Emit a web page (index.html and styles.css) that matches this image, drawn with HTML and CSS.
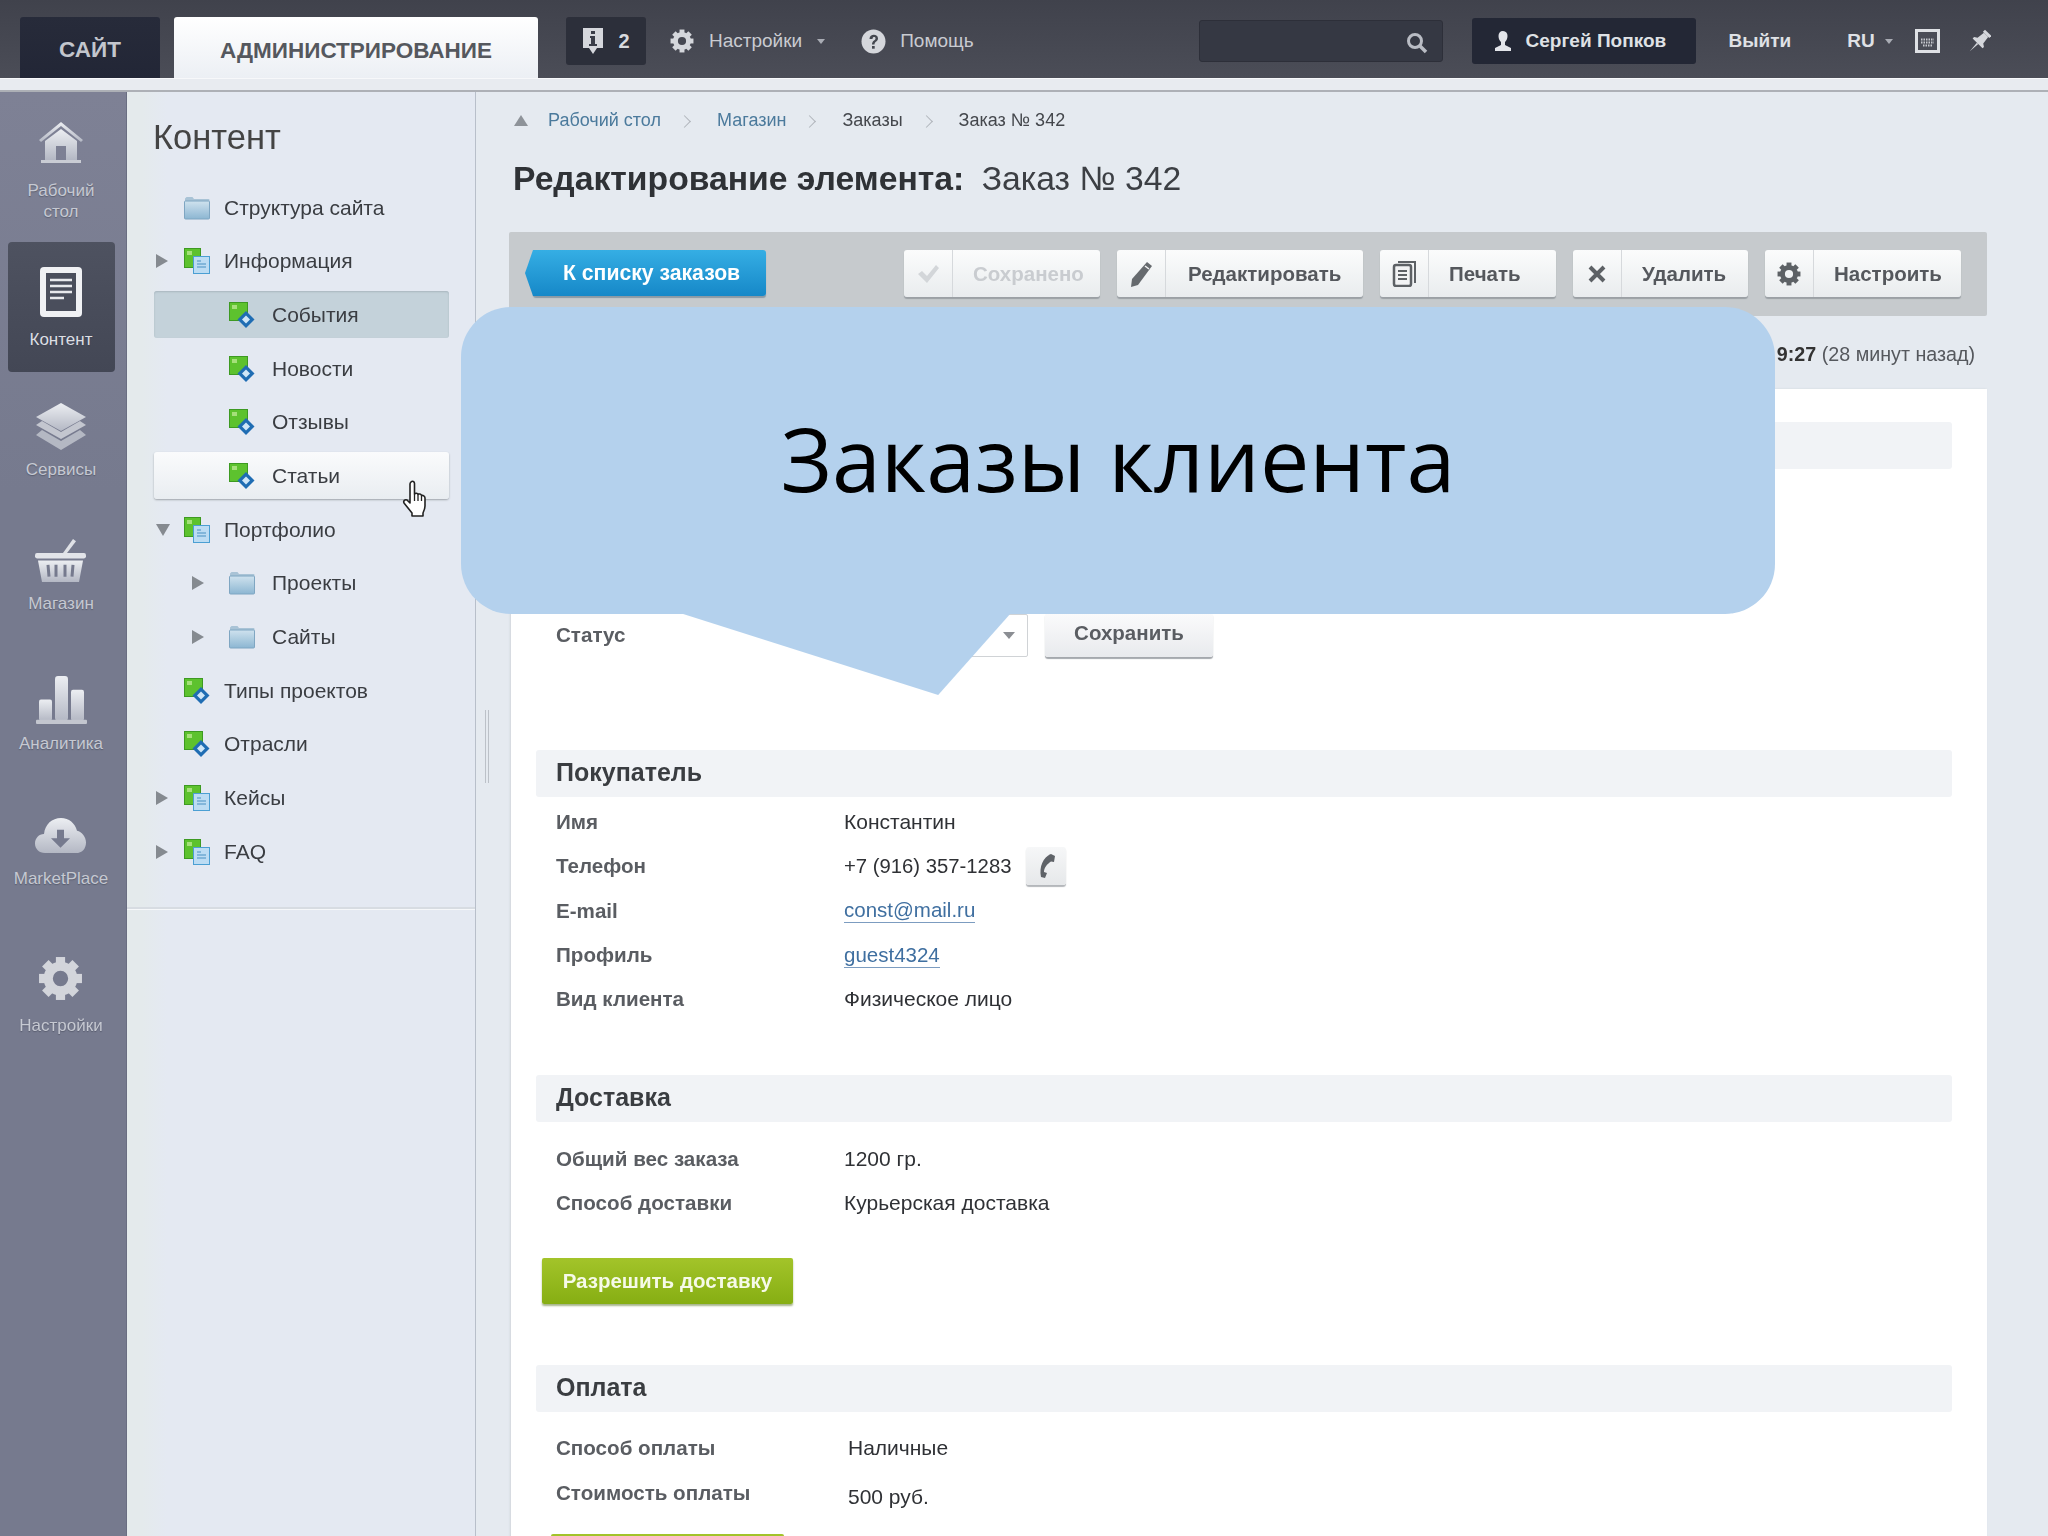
FILE: index.html
```html
<!DOCTYPE html>
<html lang="ru">
<head>
    <meta charset="UTF-8">
    <title>Заказ № 342</title>
    <link rel="stylesheet" href="styles.css">
</head>
<body>

<svg class="defs" aria-hidden="true">
    <defs>
        <linearGradient id="silver" x1="0" y1="0" x2="0" y2="1">
            <stop offset="0" stop-color="#eceef2"/>
            <stop offset="1" stop-color="#b4b8c4"/>
        </linearGradient>
        <linearGradient id="folderfill" x1="0" y1="0" x2="0" y2="1">
            <stop offset="0" stop-color="#cfe2ee"/>
            <stop offset="1" stop-color="#8cb6d2"/>
        </linearGradient>
        <symbol id="i-folder" viewBox="0 0 26 24">
            <path d="M1 4V2.500L2.500 1h6L10 3h14.500q1 0 1 1v2H1z" fill="#a9c3d6"/>
            <rect x="0.500" y="5" width="25" height="18" rx="1" fill="url(#folderfill)" stroke="#7fa6c2"/>
        </symbol>
        <symbol id="i-multi" viewBox="0 0 26 26">
            <rect x="0.500" y="0.500" width="16" height="19" fill="#5dc22e" stroke="#3d9a22"/>
            <rect x="3" y="3" width="5" height="4" fill="#a5e07a"/>
            <rect x="9.500" y="8.500" width="16" height="17" fill="#bcdcf3" stroke="#4b9fd3"/>
            <path d="M13 13h4M13 16h9M13 19h9" stroke="#6fa9d2" stroke-width="1.500"/>
        </symbol>
        <symbol id="i-single" viewBox="0 0 26 26">
            <rect x="0.500" y="0.500" width="18" height="18" fill="#5dc22e" stroke="#3d9a22"/>
            <rect x="3" y="3" width="5" height="4" fill="#a5e07a"/>
            <path d="M17 9l8.500 8.500-8.500 8.500-8.500-8.500z" fill="#1f6db3"/>
            <path d="M17 13.500l4 4-4 4-4-4z" fill="#cfe6f7"/>
        </symbol>
        <symbol id="i-gear" viewBox="0 0 44 44">
            <circle cx="22" cy="22" r="12" fill="none" stroke="currentColor" stroke-width="9"/>
            <g fill="currentColor">
                <rect x="17.500" y="1" width="9" height="10"/>
                <rect x="17.500" y="1" width="9" height="10" transform="rotate(45 22 22)"/>
                <rect x="17.500" y="1" width="9" height="10" transform="rotate(90 22 22)"/>
                <rect x="17.500" y="1" width="9" height="10" transform="rotate(135 22 22)"/>
                <rect x="17.500" y="1" width="9" height="10" transform="rotate(180 22 22)"/>
                <rect x="17.500" y="1" width="9" height="10" transform="rotate(225 22 22)"/>
                <rect x="17.500" y="1" width="9" height="10" transform="rotate(270 22 22)"/>
                <rect x="17.500" y="1" width="9" height="10" transform="rotate(315 22 22)"/>
            </g>
        </symbol>
    </defs>
</svg>

<div class="app">

    <header class="topbar">
        <a class="tab tab-site">САЙТ</a>
        <a class="tab tab-admin">АДМИНИСТРИРОВАНИЕ</a>
        <div class="notify">
            <svg width="22" height="28" viewBox="0 0 22 28"><path d="M1 1h20v20h-6l-4 6-4-6H1z" fill="#d5d7dc"/><rect x="9" y="4" width="4" height="3" fill="#3a3d48"/><path d="M8 9h5v8h2v2H7v-2h2v-6H8z" fill="#3a3d48"/></svg>
            <span>2</span>
        </div>
        <a class="top-link top-settings">
            <svg class="gear-top" width="24" height="24"><use href="#i-gear"/></svg>
            Настройки<i class="caret"></i>
        </a>
        <a class="top-link top-help">
            <svg width="25" height="25" viewBox="0 0 25 25"><circle cx="12.500" cy="12.500" r="12" fill="#d5d7dc"/><path d="M8.500 10c0-5.500 8.500-5.500 8.500-.5 0 3-3.500 3-3.500 6h-2.500c0-4 3.500-4 3.500-6 0-2-3-2-3 .5z" fill="#44474f"/><rect x="11" y="17" width="2.700" height="2.700" fill="#44474f"/></svg>
            Помощь
        </a>
        <div class="search">
            <svg width="22" height="22" viewBox="0 0 22 22"><circle cx="9" cy="9" r="6.500" fill="none" stroke="#b9bcc4" stroke-width="3"/><path d="M14 14l6 6" stroke="#b9bcc4" stroke-width="3.500"/></svg>
        </div>
        <div class="user">
            <svg width="20" height="22" viewBox="0 0 20 22"><path d="M10 1c3 0 4.500 2.200 4.500 5s-1.300 5-2.500 6v3l6 3v3H2v-3l6-3v-3C6.800 11 5.500 9 5.500 6S7 1 10 1z" fill="#e3e5ea"/></svg>
            Сергей Попков
        </div>
        <a class="logout">Выйти</a>
        <a class="lang">RU<i class="caret"></i></a>
        <svg class="kbd" width="25" height="24" viewBox="0 0 25 24"><rect x="1.500" y="1.500" width="22" height="21" fill="#4b4d57" stroke="#dfe1e5" stroke-width="3"/><path d="M6 10.500h13M6 13.500h13M8 16.500h9" stroke="#c8cad0" stroke-width="2" stroke-dasharray="1.500 1"/></svg>
        <svg class="pin" width="24" height="26" viewBox="0 0 24 26"><g transform="rotate(45 12 13)" fill="#d5d7dc"><rect x="7.500" y="0" width="9" height="3"/><path d="M9 3h6l1 8 3 2v2H5v-2l3-2z"/><path d="M11 15h2l-1 11z"/></g></svg>
    </header>
    <div class="strip"></div>

    <div class="layout">

        <nav class="nav">
            <a class="nav-item nav-home">
                <svg width="44" height="41" viewBox="0 0 44 41"><path d="M22 0L44 18l-2 2L22 4 2 20l-2-2z" fill="url(#silver)"/><path d="M6 19L22 7l16 12v19H27V24h-10v14H6z" fill="url(#silver)"/><rect x="2" y="38" width="40" height="3" fill="#c9ccd4"/></svg>
                <span>Рабочий<br>стол</span>
            </a>
            <a class="nav-item nav-active">
                <svg width="42" height="50" viewBox="0 0 42 50"><rect width="42" height="50" rx="4" fill="#f0f1f4"/><rect x="6" y="6" width="30" height="38" fill="#4a4e5c"/><path d="M10 13h22M10 19h22M10 25h22M10 31h14" stroke="#e8e9ed" stroke-width="2.500"/></svg>
                <span>Контент</span>
            </a>
            <a class="nav-item nav-services">
                <svg width="50" height="47" viewBox="0 0 50 47"><path d="M25 0l25 14-25 14L0 14z" fill="url(#silver)"/><path d="M6 18l19 11 19-11 6 4-25 14L0 22z" fill="#c3c6cf"/><path d="M6 27l19 11 19-11 6 5-25 15L0 32z" fill="#b4b8c3"/></svg>
                <span>Сервисы</span>
            </a>
            <a class="nav-item nav-shop">
                <svg width="51" height="44" viewBox="0 0 51 41" preserveAspectRatio="none"><path d="M28 14L38 1l3 2-9 11z" fill="#dfe1e6"/><rect y="14" width="51" height="5" rx="2" fill="#e2e4e9"/><path d="M3 21h45l-4 20H7z" fill="url(#silver)"/><path d="M13 25l1 11M21 25v11M30 25v11M38 25l-1 11" stroke="#767a8e" stroke-width="3"/></svg>
                <span>Магазин</span>
            </a>
            <a class="nav-item nav-stats">
                <svg width="51" height="48" viewBox="0 0 51 45" preserveAspectRatio="none"><rect x="3" y="22" width="13" height="20" rx="2" fill="url(#silver)"/><rect x="19" y="0" width="13" height="42" rx="3" fill="url(#silver)"/><rect x="35" y="13" width="13" height="29" rx="2" fill="url(#silver)"/><rect y="41" width="51" height="4" rx="1" fill="#c3c6cf"/></svg>
                <span>Аналитика</span>
            </a>
            <a class="nav-item nav-market">
                <svg width="51" height="35" viewBox="0 0 51 33" preserveAspectRatio="none"><path d="M10 33C4 33 0 29 0 24c0-5 4-9 9-9C10 6 17 0 26 0c8 0 14 5 16 12 5 1 9 6 9 11 0 6-4 10-10 10z" fill="url(#silver)"/><path d="M22 11h7v8h6L25.500 28 16 19h6z" fill="#767a8e"/></svg>
                <span>MarketPlace</span>
            </a>
            <a class="nav-item nav-config">
                <svg class="gear-nav" width="45" height="45"><use href="#i-gear"/></svg>
                <span>Настройки</span>
            </a>
        </nav>

        <aside class="panel">
            <div class="panel-top">
                <h2 class="panel-title">Контент</h2>
                <ul class="tree">
                    <li class="tree-row"><i class="arrow"></i><svg class="tree-icon"><use href="#i-folder"/></svg>Структура сайта</li>
                    <li class="tree-row"><i class="arrow arrow-right"></i><svg class="tree-icon"><use href="#i-multi"/></svg>Информация</li>
                    <li class="tree-row sub selected"><i class="arrow"></i><svg class="tree-icon"><use href="#i-single"/></svg>События</li>
                    <li class="tree-row sub"><i class="arrow"></i><svg class="tree-icon"><use href="#i-single"/></svg>Новости</li>
                    <li class="tree-row sub"><i class="arrow"></i><svg class="tree-icon"><use href="#i-single"/></svg>Отзывы</li>
                    <li class="tree-row sub hovered"><i class="arrow"></i><svg class="tree-icon"><use href="#i-single"/></svg>Статьи
                        <svg class="hand" width="28" height="38" viewBox="0 0 28 38"><path d="M9 2c1.500-1.500 3.500-.5 3.500 1.500V14c1-1 3-1 3.500.5 1-1 3-.5 3.500 1 1.500-.5 3.500.5 3.500 2.500v8c0 3-1 5-2 7v3H10v-3L2 23c-1-2 1-4 3-3l3 3V4c0-1 .5-1.500 1-2z" fill="#fff" stroke="#222" stroke-width="1.600" stroke-linejoin="round"/><path d="M12.500 14v7M16 15v6M19.500 16v5" stroke="#222" stroke-width="1.300"/></svg>
                    </li>
                    <li class="tree-row"><i class="arrow arrow-down"></i><svg class="tree-icon"><use href="#i-multi"/></svg>Портфолио</li>
                    <li class="tree-row sub"><i class="arrow arrow-right"></i><svg class="tree-icon"><use href="#i-folder"/></svg>Проекты</li>
                    <li class="tree-row sub"><i class="arrow arrow-right"></i><svg class="tree-icon"><use href="#i-folder"/></svg>Сайты</li>
                    <li class="tree-row"><i class="arrow"></i><svg class="tree-icon"><use href="#i-single"/></svg>Типы проектов</li>
                    <li class="tree-row"><i class="arrow"></i><svg class="tree-icon"><use href="#i-single"/></svg>Отрасли</li>
                    <li class="tree-row"><i class="arrow arrow-right"></i><svg class="tree-icon"><use href="#i-multi"/></svg>Кейсы</li>
                    <li class="tree-row"><i class="arrow arrow-right"></i><svg class="tree-icon"><use href="#i-multi"/></svg>FAQ</li>
                </ul>
            </div>
        </aside>

        <div class="grip"></div>

        <main class="main">
            <div class="crumbs">
                <i class="crumb-up"></i>
                <a>Рабочий стол</a><i class="crumb-sep"></i>
                <a>Магазин</a><i class="crumb-sep"></i>
                <span>Заказы</span><i class="crumb-sep"></i>
                <span>Заказ № 342</span>
            </div>

            <h1 class="title"><b>Редактирование элемента:</b> Заказ № 342</h1>

            <div class="toolbar">
                <a class="back">К списку заказов</a>
                <a class="tool tool-saved">
                    <span class="tool-icon"><svg width="24" height="20" viewBox="0 0 24 20"><path d="M2 10l4-3 5 5L20 1l3 3-12 15z" fill="#d3d6d9"/></svg></span>
                    <span class="tool-text">Сохранено</span>
                </a>
                <a class="tool tool-edit">
                    <span class="tool-icon"><svg width="24" height="26" viewBox="0 0 24 26"><path d="M18 1l5 4L9 24l-7 2 1-8z" fill="#666a6e"/><path d="M16 5l4 3" stroke="#f4f5f6" stroke-width="1.500"/></svg></span>
                    <span class="tool-text">Редактировать</span>
                </a>
                <a class="tool tool-print">
                    <span class="tool-icon"><svg width="24" height="26" viewBox="0 0 24 26"><path d="M6 1h17v21" fill="none" stroke="#5d6165" stroke-width="2"/><rect x="2" y="4" width="17" height="21" rx="2" fill="#f2f3f4" stroke="#5d6165" stroke-width="2.500"/><path d="M6 10h9M6 14h9M6 18h9" stroke="#5d6165" stroke-width="2"/></svg></span>
                    <span class="tool-text">Печать</span>
                </a>
                <a class="tool tool-delete">
                    <span class="tool-icon"><svg width="18" height="18" viewBox="0 0 18 18"><path d="M2 2l14 14M16 2L2 16" stroke="#5d6165" stroke-width="4"/></svg></span>
                    <span class="tool-text">Удалить</span>
                </a>
                <a class="tool tool-setup">
                    <span class="tool-icon"><svg class="gear-tool" width="24" height="24"><use href="#i-gear"/></svg></span>
                    <span class="tool-text">Настроить</span>
                </a>
            </div>

            <p class="stamp"><b>9:27</b> (28 минут назад)</p>

            <section class="card">
                <div class="sect-head"></div>

                <div class="status-row">
                    <span class="label">Статус</span>
                    <div class="select"><i class="caret caret-select"></i></div>
                    <a class="save">Сохранить</a>
                </div>

                <h3 class="sect-head buyer-head">Покупатель</h3>
                <dl class="rows buyer-rows">
                    <div class="row"><dt class="label">Имя</dt><dd>Константин</dd></div>
                    <div class="row"><dt class="label">Телефон</dt><dd><span class="phone">+7 (916) 357-1283</span>
                        <a class="call"><svg width="20" height="26" viewBox="0 0 20 26"><path d="M15 1l4 2-1 6-3-.5C11 11 8 15 8 19l3 1-2 5-4-1C3 14 7 4 15 1z" fill="#5f6368"/></svg></a></dd></div>
                    <div class="row"><dt class="label">E-mail</dt><dd><a class="link">const@mail.ru</a></dd></div>
                    <div class="row"><dt class="label">Профиль</dt><dd><a class="link">guest4324</a></dd></div>
                    <div class="row"><dt class="label">Вид клиента</dt><dd>Физическое лицо</dd></div>
                </dl>

                <h3 class="sect-head delivery-head">Доставка</h3>
                <dl class="rows delivery-rows">
                    <div class="row"><dt class="label">Общий вес заказа</dt><dd>1200 гр.</dd></div>
                    <div class="row"><dt class="label">Способ доставки</dt><dd>Курьерская доставка</dd></div>
                </dl>
                <a class="green">Разрешить доставку</a>

                <h3 class="sect-head pay-head">Оплата</h3>
                <dl class="rows pay-rows">
                    <div class="row"><dt class="label">Способ оплаты</dt><dd>Наличные</dd></div>
                    <div class="row"><dt class="label">Стоимость оплаты</dt><dd class="low">500 руб.</dd></div>
                </dl>
                <a class="green green-pay"></a>
            </section>
        </main>
    </div>
</div>

<div class="callout">Заказы клиента</div>
<div class="callout-tail"></div>

</body>
</html>
```

FILE: styles.css
```css
* {
    box-sizing: border-box;
}
html, body {
    margin: 0;
    height: 1536px;
    overflow: hidden;
}
body {
    position: relative;
    font-family: "Liberation Sans", Arial, sans-serif;
    color: #333;
    background-color: #e5eaf0;
}
.defs {
    position: absolute;
    width: 0;
    height: 0;
}
.app {
    height: 1536px;
    display: flex;
    flex-direction: column;
    filter: blur(0.7px);
}

/* top bar */
.topbar {
    height: 78px;
    flex: none;
    display: flex;
    align-items: flex-start;
    padding-left: 20px;
    background: linear-gradient(#40424c, #4b4d57);
    color: #c9cbd1;
    font-size: 19px;
}
.tab {
    height: 61px;
    margin-top: 17px;
    text-align: center;
    font-weight: bold;
    font-size: 22.500px;
    line-height: 66px;
}
.tab-site {
    width: 140px;
    background: linear-gradient(#272b3a, #222636);
    color: #c3c6cd;
    border-radius: 3px 3px 0 0;
}
.tab-admin {
    width: 364px;
    height: 73px;
    margin-left: 14px;
    background: linear-gradient(#fff, #e8ecf2);
    color: #55585e;
    border-radius: 3px 3px 0 0;
    line-height: 68px;
}
.notify {
    width: 80px;
    height: 48px;
    margin: 17px 0 0 28px;
    display: flex;
    align-items: center;
    justify-content: center;
    gap: 14px;
    background-color: #2c2f3a;
    border-radius: 3px;
    font-weight: bold;
    font-size: 20px;
    color: #d8dade;
}
.top-link {
    height: 48px;
    margin-top: 17px;
    display: flex;
    align-items: center;
}
.top-settings {
    margin-left: 24px;
    gap: 15px;
}
.top-help {
    margin-left: 36px;
    gap: 14px;
}
.gear-top {
    color: #d5d7dc;
}
.caret {
    display: inline-block;
    width: 0;
    height: 0;
    margin-left: 0;
    border: 4px solid transparent;
    border-top: 5px solid #a9acb4;
    border-bottom: 0;
}
.search {
    width: 244px;
    height: 42px;
    margin: 20px 0 0 225px;
    padding: 11px 14px 0 0;
    display: flex;
    justify-content: flex-end;
    background-color: #353843;
    border: 1px solid #2d2f39;
    border-radius: 3px;
}
.user {
    width: 224px;
    height: 46px;
    margin: 18px 0 0 29px;
    padding-left: 21px;
    display: flex;
    align-items: center;
    gap: 13px;
    background-color: #232735;
    border-radius: 3px;
    color: #dfe1e5;
    font-weight: bold;
    font-size: 19px;
}
.logout {
    margin: 30px 0 0 33px;
    font-weight: bold;
    color: #dfe1e5;
}
.lang {
    margin: 30px 0 0 56px;
    font-weight: bold;
    color: #dfe1e5;
}
.lang .caret {
    margin: 0 0 3px 10px;
}
.kbd {
    margin: 29px 0 0 22px;
}
.pin {
    margin: 29px 0 0 27px;
}
.strip {
    height: 14px;
    flex: none;
    background-color: #e8ebf0;
    border-bottom: 2px solid #adb0b6;
    border-top: 1px solid #f7f8fa;
}

.layout {
    flex: 1;
    display: flex;
    min-height: 0;
    position: relative;
}

/* left icons */
.nav {
    width: 127px;
    flex: none;
    padding-right: 4px;
    display: flex;
    flex-direction: column;
    align-items: center;
    background-color: #767a8e;
    background-image: linear-gradient(#7e8195, #767a8e 400px);
    border-right: 1px solid #6a6e82;
}
.nav-item {
    display: flex;
    flex-direction: column;
    align-items: center;
    color: #c6c9d2;
    font-size: 17px;
    line-height: 21px;
    text-align: center;
    text-shadow: 0 1px 1px rgba(60, 63, 80, 0.5);
}
.nav-item svg {
    display: block;
    margin-bottom: 9px;
}
.nav-home {
    margin-top: 30px;
}
.nav-home svg {
    margin-bottom: 17px;
}
.nav-active {
    width: 107px;
    height: 130px;
    margin-top: 20px;
    padding-top: 25px;
    background: linear-gradient(#4e5260, #434755);
    border-radius: 4px;
    color: #dcdee3;
}
.nav-active svg {
    margin-bottom: 12px;
}
.nav-services {
    margin-top: 31px;
}
.nav-shop {
    margin-top: 57.500px;
}
.nav-shop svg {
    margin-bottom: 11.500px;
}
.nav-stats {
    margin-top: 61.500px;
}
.nav-market {
    margin-top: 64.500px;
}
.nav-market svg {
    margin-bottom: 14.500px;
}
.nav-config {
    margin-top: 67.500px;
}
.nav-config svg {
    margin-bottom: 13.500px;
}
.gear-nav {
    color: #d3d5db;
}

/* tree panel */
.panel {
    width: 349px;
    flex: none;
    background: linear-gradient(90deg, #e4eaec 15px, #e4e9f2 40px);
    border-right: 1px solid #b8bfca;
}
.panel-top {
    height: 817px;
    padding: 25px 26px 0 27px;
    border-bottom: 2px solid #d7dce2;
    box-shadow: 0 1px 0 #f6f8fa;
}
.panel-title {
    margin: 0 0 0 -1px;
    height: 40px;
    font-size: 34.500px;
    line-height: 40px;
    font-weight: normal;
    color: #444;
}
.tree {
    list-style: none;
    margin: 27px 0 0;
    padding: 0;
}
.tree-row {
    position: relative;
    height: 47px;
    margin-bottom: 6.700px;
    padding-left: 2px;
    display: flex;
    align-items: center;
    font-size: 21px;
    color: #3a3d42;
}
.tree-row.sub {
    padding-left: 38px;
}
.arrow {
    width: 12px;
    height: 14px;
    flex: none;
    margin-right: 16px;
}
.sub .arrow {
    margin-right: 25px;
}
.arrow-right {
    border-left: 12px solid #858a90;
    border-top: 7px solid transparent;
    border-bottom: 7px solid transparent;
}
.arrow-down {
    width: 14px;
    height: 12px;
    margin-right: 14px;
    border-top: 12px solid #858a90;
    border-left: 7px solid transparent;
    border-right: 7px solid transparent;
}
.tree-icon {
    width: 26px;
    height: 26px;
    flex: none;
    margin-right: 14px;
}
.sub .tree-icon {
    margin-right: 17px;
}
.selected {
    background-color: #c4d2da;
    border-radius: 3px;
    box-shadow: inset 0 1px 2px #a8b6be;
}
.hovered {
    background: linear-gradient(#fafbfc, #e9edf1);
    border-radius: 3px;
    box-shadow: 0 1px 2px #9ea3a9;
}
.hand {
    position: absolute;
    left: 248px;
    top: 28px;
}
.grip {
    position: relative;
    z-index: 1;
    width: 4px;
    height: 73px;
    margin: 618px -13px 0 9px;
    flex: none;
    border-left: 1px solid #bcc1c8;
    border-right: 1px solid #bcc1c8;
}

/* main column */
.main {
    flex: 1;
    padding: 16px 61px 0 33px;
    min-width: 0;
    background-color: #e5eaf0;
}
.crumbs {
    height: 24px;
    padding-left: 5px;
    display: flex;
    align-items: center;
    font-size: 18px;
    color: #44474c;
}
.crumbs a {
    color: #4b7a9c;
}
.crumb-up {
    width: 14px;
    height: 11px;
    margin-right: 20px;
    border-bottom: 11px solid #8e9399;
    border-left: 7px solid transparent;
    border-right: 7px solid transparent;
}
.crumb-sep {
    width: 9px;
    height: 9px;
    margin: 2px 28px 0 19px;
    border-top: 1px solid #b0b5bb;
    border-right: 1px solid #b0b5bb;
    transform: rotate(45deg);
}
.title {
    margin: 26px 0 0 4px;
    height: 40px;
    font-size: 33.700px;
    line-height: 40px;
    font-weight: normal;
    color: #3c3f44;
}
.title b {
    margin-right: 8px;
    color: #2f3236;
}
.toolbar {
    height: 84px;
    margin-top: 34px;
    padding: 18px 24px 0 16px;
    display: flex;
    gap: 17px;
    background-color: #c6cacd;
    border-radius: 2px;
}
.back {
    position: relative;
    width: 233px;
    height: 46px;
    flex: none;
    margin: 0 121px 0 8px;
    padding-left: 30px;
    background: linear-gradient(#35aee4, #1688c8);
    border-radius: 3px;
    box-shadow: 0 2px 1px #8a9aa6;
    color: #fff;
    font-weight: bold;
    font-size: 21.200px;
    line-height: 46px;
    white-space: nowrap;
}
.back::before {
    content: "";
    position: absolute;
    left: -8px;
    top: 0;
    width: 16px;
    height: 46px;
    background: linear-gradient(#35aee4, #1688c8);
    clip-path: polygon(50% 0, 100% 0, 100% 100%, 50% 100%, 0 50%);
}
.tool {
    height: 47px;
    flex: none;
    display: flex;
    align-items: center;
    background: linear-gradient(#fbfcfc, #e9ecee);
    border-radius: 3px;
    box-shadow: 0 2px 1px #9ba0a5;
    font-weight: bold;
    font-size: 20.500px;
    color: #55585d;
}
.tool-icon {
    width: 49px;
    height: 47px;
    flex: none;
    display: flex;
    align-items: center;
    justify-content: center;
    border-right: 1px solid #d6d9dc;
}
.tool-text {
    padding-left: 20px;
    white-space: nowrap;
}
.tool-saved {
    width: 196px;
    color: #c9ccd0;
}
.tool-edit {
    width: 246px;
}
.tool-edit .tool-text {
    padding-left: 22px;
}
.tool-print {
    width: 176px;
}
.tool-delete {
    width: 175px;
}
.tool-setup {
    width: 196px;
}
.gear-tool {
    color: #5d6165;
}
.stamp {
    height: 24px;
    margin: 26px 12px 0 0;
    text-align: right;
    font-size: 19.700px;
    line-height: 24px;
    color: #55585d;
}
.stamp b {
    color: #333;
}

/* order card */
.card {
    height: 1200px;
    margin: 23px 0 0 2px;
    padding: 33px 35px 0 25px;
    background-color: #fff;
    box-shadow: -1px 0 2px #d0d5da;
}
.sect-head {
    height: 47px;
    margin: 0;
    padding-left: 20px;
    background-color: #f1f3f6;
    border-radius: 3px;
    font-size: 25px;
    line-height: 45px;
    color: #3a3d41;
}
.status-row {
    height: 44px;
    margin-top: 144px;
    display: flex;
    align-items: center;
    padding-left: 20px;
}
.label {
    width: 288px;
    flex: none;
    font-weight: bold;
    font-size: 20.600px;
    color: #5a5d62;
}
.select {
    width: 184px;
    height: 43px;
    display: flex;
    align-items: center;
    justify-content: flex-end;
    padding-right: 12px;
    border: 1px solid #d0d3d6;
    border-radius: 2px;
}
.caret-select {
    margin: 0;
    border-width: 6px;
    border-top: 7px solid #8b8e93;
    border-bottom: 0;
}
.save {
    width: 168px;
    height: 44px;
    margin-left: 17px;
    background: linear-gradient(#fbfbfc, #e8eaed);
    border-radius: 3px;
    box-shadow: 0 2px 1px #a4a8ad;
    text-align: center;
    font-weight: bold;
    font-size: 20.500px;
    line-height: 40px;
    color: #5a5d62;
}
.buyer-head {
    margin-top: 93px;
}
.rows {
    margin: 0;
    padding-left: 20px;
}
.row {
    height: 44.300px;
    display: flex;
    align-items: center;
}
.row dd {
    margin: 0;
    display: flex;
    align-items: center;
    font-size: 21px;
    color: #2f3135;
}
.buyer-rows {
    margin-top: 3px;
}
.phone {
    font-size: 20.300px;
}
.link {
    font-size: 20.500px;
    color: #3f6fa0;
    border-bottom: 1px solid #7c9cc0;
}
.call {
    width: 40px;
    height: 38px;
    margin-left: 15px;
    display: flex;
    align-items: center;
    justify-content: center;
    background: linear-gradient(#f6f7f8, #e6e8ea);
    border-radius: 3px;
    box-shadow: 0 2px 1px #b4b7bb;
}
.delivery-head {
    margin-top: 54px;
}
.delivery-rows {
    margin-top: 14px;
}
.green {
    display: block;
    width: 251px;
    height: 46px;
    margin: 33px 0 0 6px;
    background: linear-gradient(#a3c42a, #86ae13);
    border-radius: 2px;
    box-shadow: 0 2px 2px #a6b58a;
    text-align: center;
    font-weight: bold;
    font-size: 20.500px;
    line-height: 46px;
    color: #f6fae8;
}
.pay-head {
    margin-top: 61px;
}
.pay-rows {
    margin-top: 14px;
}
.pay-rows .label {
    width: 292px;
}
.low {
    padding-top: 8px;
}
.green-pay {
    width: 233px;
    margin: 19px 0 0 15px;
}

/* speech bubble */
.callout {
    position: absolute;
    left: 461px;
    top: 307px;
    width: 1314px;
    height: 307px;
    padding-bottom: 6px;
    display: flex;
    align-items: center;
    justify-content: center;
    background-color: #b4d1ed;
    border-radius: 50px;
    font-family: "Open Sans", sans-serif;
    font-size: 88px;
    color: #000;
}
.callout-tail {
    position: absolute;
    left: 680px;
    top: 613px;
    width: 331px;
    height: 82px;
    background-color: #b4d1ed;
    clip-path: polygon(0 0, 100% 0, 78% 100%);
}
```
